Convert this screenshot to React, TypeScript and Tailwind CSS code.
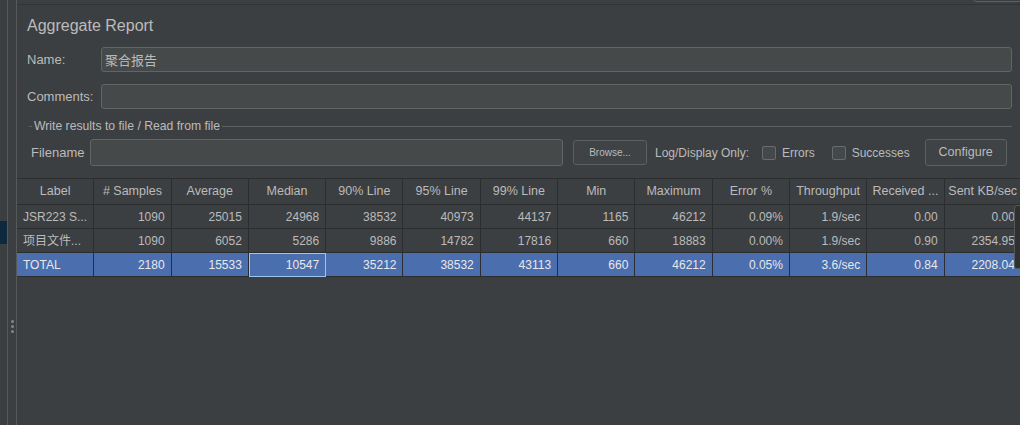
const font = { fontFamily: '"Liberation Sans", Arial, "Noto Sans CJK SC", sans-serif' }

const columns = [
  'Label',
  '# Samples',
  'Average',
  'Median',
  '90% Line',
  '95% Line',
  '99% Line',
  'Min',
  'Maximum',
  'Error %',
  'Throughput',
  'Received ...',
  'Sent KB/sec',
]

const rows = [
  ['JSR223 S...', '1090', '25015', '24968', '38532', '40973', '44137', '1165', '46212', '0.09%', '1.9/sec', '0.00', '0.00'],
  ['项目文件...', '1090', '6052', '5286', '9886', '14782', '17816', '660', '18883', '0.00%', '1.9/sec', '0.90', '2354.95'],
  ['TOTAL', '2180', '15533', '10547', '35212', '38532', '43113', '660', '46212', '0.05%', '3.6/sec', '0.84', '2208.04'],
]

function TextInput({ h = 'h-[25px]', children }: { h?: string; children?: React.ReactNode }) {
  return (
    <div className={`${h} flex min-w-0 flex-1 items-center rounded-[3px] border border-[#646464] bg-[#45494a] px-[3px] text-[13px] text-[#bbbbbb]`}>
      {children}
    </div>
  )
}

function Checkbox({ label }: { label: string }) {
  return (
    <div className="flex items-center">
      <div className="h-[14px] w-[14px] shrink-0 rounded-[2px] border border-[#6b6b6b] bg-[#43494a]" />
      <span className="ml-[6px] whitespace-nowrap">{label}</span>
    </div>
  )
}

function ResultsTable() {
  return (
    <div className="relative mt-[12px] flex-1 overflow-hidden">
      <div className="grid w-[1010px] grid-cols-[repeat(13,77.3px)] border-t border-[#2b2d2e] text-[12px]">
        {columns.map((c) => (
          <div
            key={c}
            className="flex h-[26px] items-center justify-center overflow-hidden whitespace-nowrap border-b border-r border-[#2b2d2e] text-[12.5px] text-[#bbbbbb]"
          >
            {c}
          </div>
        ))}
        {rows.map((r, ri) => {
          const total = ri === rows.length - 1
          return r.map((v, ci) => (
            <div
              key={`${ri}-${ci}`}
              className={`flex h-[24px] items-center overflow-hidden whitespace-nowrap border-b border-r border-[#2b2d2e] ${
                ci === 0 ? 'justify-start pl-[6px]' : 'justify-end pr-[6px]'
              } ${total ? 'bg-[#4b6eaf] text-[#e8e8e8]' : 'text-[#bbbbbb]'} ${
                total && ci === 3 ? 'outline outline-1 -outline-offset-1 outline-[#9cc5f2]' : ''
              }`}
            >
              {v}
            </div>
          ))
        })}
      </div>
      <div className="absolute left-[997px] top-[27px] h-[64px] w-[12px] rounded-l-[3px] border border-[#55595b] bg-[#2e3032]">
        <div className="ml-[5px] mt-[10px] h-[40px] w-[2px] bg-[#4e8f6e]" />
      </div>
    </div>
  )
}

export default function App() {
  return (
    <div className="relative flex h-[425px] w-[1020px] overflow-hidden bg-[#3c3f41] text-[#bbbbbb]" style={font}>
      {/* left tool strip */}
      <div className="relative w-[7px] shrink-0">
        <div className="absolute left-0 top-[221px] h-[23px] w-[7px] bg-[#0d293e]" />
      </div>
      <div className="w-px shrink-0 bg-[#565859]" />
      <div className="flex w-[8px] shrink-0 flex-col items-center pt-[320px]">
        <div className="flex flex-col gap-[2px]">
          <div className="h-[3px] w-[3px] rounded-full bg-[#858585]" />
          <div className="h-[3px] w-[3px] rounded-full bg-[#858585]" />
          <div className="h-[3px] w-[3px] rounded-full bg-[#858585]" />
        </div>
      </div>
      <div className="w-px shrink-0 bg-[#565859]" />

      {/* main panel */}
      <div className="flex min-w-0 flex-1 flex-col">
        <div className="h-[4px]" />
        <div className="h-px bg-[#313335]" />

        <div className="mt-[10px] h-[22px] pl-[10px] text-[16px] leading-[22px] text-[#bbbbbb]">Aggregate Report</div>

        <div className="mt-[10px] flex items-center pl-[10px] pr-[8px] text-[13px]">
          <span className="w-[74px] shrink-0">Name:</span>
          <TextInput>
            <span style={{ fontFamily: '"Noto Sans CJK SC", sans-serif' }}>聚合报告</span>
          </TextInput>
        </div>

        <div className="mt-[12px] flex items-center pl-[10px] pr-[8px] text-[13px]">
          <span className="w-[74px] shrink-0">Comments:</span>
          <TextInput />
        </div>

        <div className="mt-[9px] flex h-[16px] items-center pl-[12px] pr-[8px] text-[12.2px]">
          <div className="h-px w-[3px] bg-[#5e6060]" />
          <span className="px-[2px]">Write results to file / Read from file</span>
          <div className="h-px flex-1 bg-[#5e6060]" />
        </div>

        <div className="mt-[5px] flex h-[27px] items-center pl-[14px] text-[12px]">
          <span className="w-[59px] shrink-0 text-[13px]">Filename</span>
          <div className="flex h-[27px] w-[473px] shrink-0">
            <TextInput h="h-[27px]" />
          </div>
          <div className="ml-[10px] flex h-[25px] w-[74px] shrink-0 items-center justify-center rounded-[3px] border border-[#5e6060] bg-[#3f4345] text-[10px]">
            Browse...
          </div>
          <span className="ml-[8px] w-[95px] shrink-0 whitespace-nowrap">Log/Display Only:</span>
          <div className="ml-[12px]">
            <Checkbox label="Errors" />
          </div>
          <div className="ml-[17px]">
            <Checkbox label="Successes" />
          </div>
          <div className="ml-[15px] flex h-[27px] w-[82px] shrink-0 items-center justify-center rounded-[3px] border border-[#5e6060] bg-[#3f4345] text-[12.5px]">
            Configure
          </div>
        </div>

        <ResultsTable />
      </div>

      <div className="absolute left-[973px] top-[-10px] h-[12px] w-[60px] rounded-[3px] border border-[#5e6060]" />
    </div>
  )
}
